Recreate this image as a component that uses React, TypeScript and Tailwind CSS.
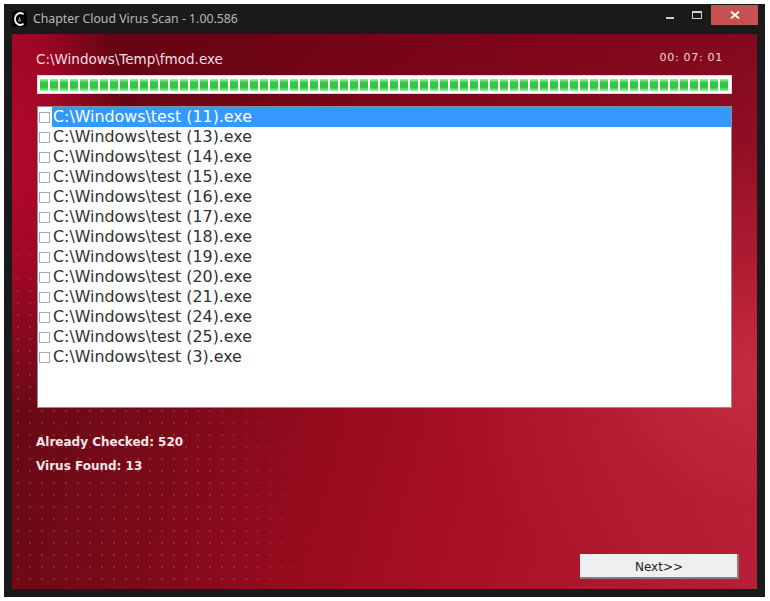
import React from "react";

const files = ["11","13","14","15","16","17","18","19","20","21","24","25","3"];
const segments = Array.from({ length: 69 }, (_, i) => i);

export default function App() {
  return (
    <div className="w-[770px] h-[601px] bg-white pl-[4px] pt-[4px] overflow-hidden">
      <div className="w-[761px] h-[593px] bg-[#1a1a1a] flex flex-col px-[8px] pb-[8px]">
        <div className="h-[30px] flex items-start shrink-0 -mx-[8px] pl-[8px] pr-[7px]">
          <svg width="15" height="16" viewBox="0 0 15 16" className="mt-[7px] shrink-0">
            <rect x="0" y="0" width="15" height="16" rx="3" fill="#000" />
            <path d="M11.6 3.4 A5.2 6 0 1 0 11.6 12.6" fill="none" stroke="#fff" strokeWidth="1.9" />
            <path d="M6.4 10 L7.5 6.5 L8.6 10 Z" fill="none" stroke="#bbb" strokeWidth="0.8" />
          </svg>
          <span className="ml-[6px] mt-[7px] text-[12.3px] leading-[16px] text-[#b8b8b8] font-['Noto_Sans','Open_Sans',sans-serif]">
            Chapter Cloud Virus Scan - 1.00.586
          </span>
          <div className="ml-auto flex items-start">
            <div className="w-[8px] h-[2px] bg-[#d0d0d0] mt-[13px]" />
            <div className="w-[10px] h-[8px] border border-[#d0d0d0] border-t-2 ml-[18px] mt-[7px]" />
            <div className="w-[47px] h-[20px] bg-[#c75050] ml-[9px] mt-[1px] flex items-center justify-center">
              <svg width="10" height="8" viewBox="0 0 10 8">
                <path d="M1 0.5 L9 7.5 M9 0.5 L1 7.5" stroke="#fff" strokeWidth="1.8" />
              </svg>
            </div>
          </div>
        </div>

        <div className="relative flex-1 flex flex-col pl-[25px] pr-[25px] bg-[radial-gradient(ellipse_110px_260px_at_0%_22%,#b4082b_0%,rgba(176,8,42,0.8)_45%,rgba(170,4,40,0)_100%),radial-gradient(ellipse_320px_230px_at_100%_62%,rgba(200,46,68,0.85)_0%,rgba(190,35,58,0.4)_55%,rgba(170,20,45,0)_100%),linear-gradient(to_bottom,rgba(100,0,18,0.6)_0%,rgba(100,0,18,0.3)_30%,rgba(100,0,18,0)_65%),linear-gradient(105deg,#5c0914_0%,#7c0a18_30%,#980b1f_48%,#a80f26_65%,#b51f36_100%)] overflow-hidden">
          <div className="absolute left-0 bottom-0 w-[330px] h-[400px] bg-[radial-gradient(circle,rgba(255,255,255,0.14)_0.8px,transparent_1.2px)] bg-[size:12px_12px] [mask-image:radial-gradient(ellipse_330px_400px_at_0%_100%,black_65%,transparent_100%)]" />

          <div className="relative flex justify-between h-[41px] items-end font-['DejaVu_Sans',sans-serif]">
            <span className="text-[13.5px] leading-[16px] text-[#f4dfe2] -ml-[1px] relative top-[-8px]">C:\Windows\Temp\fmod.exe</span>
            <span className="text-[11px] leading-[14px] tracking-[0.7px] text-[#f0d8dc] relative top-[-10px] left-[-9px] whitespace-pre">00: 07: 01</span>
          </div>

          <div className="relative h-[19px] w-[695px] bg-white border border-[#d8dcd8] flex items-center gap-[2px] pl-[2px] shrink-0">
            {segments.map((i) => (
              <div key={i} className="w-[8px] h-[12px] shrink-0 bg-[linear-gradient(to_bottom,#a0eea5_0%,#35c845_30%,#30c540_70%,#a0eea5_100%)]" />
            ))}
          </div>

          <div className="relative mt-[12px] w-[695px] h-[302px] bg-white border border-[#8d8d9a] border-b-[#9a8a90] shrink-0 font-['DejaVu_Sans',sans-serif] text-[15.85px] leading-[20px] text-[#303030]">
            {files.map((n, i) => (
              <div key={n} className="h-[20px] flex items-center pl-[1px]">
                <span className="w-[11px] h-[11px] border border-[#a8a8a8] bg-white shrink-0" />
                <span className={i === 0 ? "ml-[2px] pl-[1px] flex-1 bg-[#3399ff] text-white whitespace-nowrap" : "ml-[2px] pl-[1px] whitespace-nowrap"}>
                  C:\Windows\test ({n}).exe
                </span>
              </div>
            ))}
          </div>

          <div className="relative mt-[22px] -ml-[1px] font-['DejaVu_Sans',sans-serif] font-bold text-[12px] leading-[24px] text-[#f6e6e8]">
            <div>Already Checked: 520</div>
            <div>Virus Found: 13</div>
          </div>

          <div className="relative mt-auto mb-[10px] self-end -mr-[7px] w-[159px] h-[25px] pt-[2px] pl-[1px] bg-[#efefef] border-r-2 border-b-2 border-[#8a7a7e] flex items-center justify-center font-['DejaVu_Sans',sans-serif] text-[12px] text-[#1c1c2a]">
            Next&gt;&gt;
          </div>
        </div>
      </div>
    </div>
  );
}
